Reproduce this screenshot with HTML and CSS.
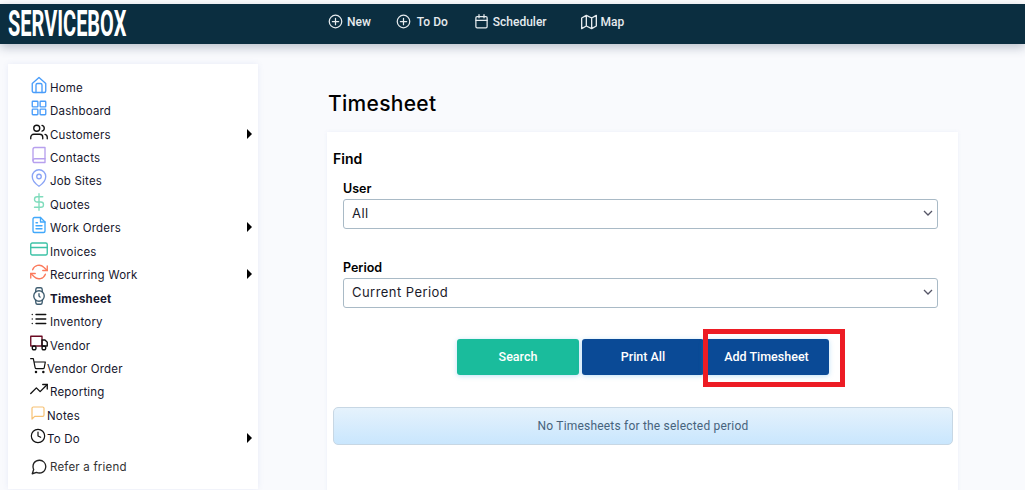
FILE: index.html
```html
<!DOCTYPE html>
<html lang="en">
<head>
<meta charset="UTF-8">
<meta name="viewport" content="width=device-width, initial-scale=1.0">
<title>Timesheet</title>
<link rel="stylesheet" href="styles.css">
</head>
<body>
<header class="topbar">
  <div class="logo-box"><span class="logo">SERVICEBOX</span></div>
  <nav class="topnav">
    <a class="topnav-new" href="#">
      <svg width="15" height="15" viewBox="0 0 24 24"><circle cx="12" cy="12" r="10"/><path d="M12 7v10M7 12h10"/></svg>New</a>
    <a class="topnav-todo" href="#">
      <svg width="15" height="15" viewBox="0 0 24 24"><circle cx="12" cy="12" r="10"/><path d="M12 7v10M7 12h10"/></svg>To Do</a>
    <a class="topnav-sched" href="#">
      <svg width="15" height="15" viewBox="0 0 24 24"><rect x="3" y="4" width="18" height="18" rx="2"/><path d="M16 1v5M8 1v5M3 10h18"/></svg>Scheduler</a>
    <a class="topnav-map" href="#">
      <svg width="16" height="16" viewBox="0 0 24 24"><path d="M1 6v16l7-4 8 4 7-4V2l-7 4-8-4-7 4zM8 2v16M16 6v16"/></svg>Map</a>
  </nav>
</header>

<div class="page">
  <aside class="sidebar">
    <a class="item" href="#"><svg class="ic c-blue" viewBox="0 0 24 24"><path d="M3 10l9-8 9 8v10a2 2 0 0 1-2 2H5a2 2 0 0 1-2-2z"/><path d="M8 22V12a2 2 0 0 1 2-2h4a2 2 0 0 1 2 2v10"/></svg><span>Home</span></a>
    <a class="item" href="#"><svg class="ic c-blue" viewBox="0 0 24 24"><rect x="3" y="3" width="7.5" height="7.5" rx="1"/><rect x="13.5" y="3" width="7.5" height="7.5" rx="1"/><rect x="13.5" y="13.5" width="7.5" height="7.5" rx="1"/><rect x="3" y="13.5" width="7.5" height="7.5" rx="1"/></svg><span>Dashboard</span></a>
    <a class="item" href="#"><svg class="ic c-black" viewBox="0 0 24 24"><path d="M17 21v-2a4 4 0 0 0-4-4H5a4 4 0 0 0-4 4v2"/><circle cx="9" cy="7" r="4"/><path d="M23 21v-2a4 4 0 0 0-3-3.87M16 3.13a4 4 0 0 1 0 7.75"/></svg><span>Customers</span><i class="arrow"></i></a>
    <a class="item" href="#"><svg class="ic c-purple" viewBox="0 0 24 24"><path d="M4 19.5A2.5 2.5 0 0 1 6.5 17H20"/><path d="M6.5 2H20v20H6.5A2.5 2.5 0 0 1 4 19.5v-15A2.5 2.5 0 0 1 6.5 2z"/></svg><span>Contacts</span></a>
    <a class="item" href="#"><svg class="ic c-periwinkle" viewBox="0 0 24 24"><path d="M21 10c0 7-9 13-9 13s-9-6-9-13a9 9 0 0 1 18 0z"/><circle cx="12" cy="10" r="3"/></svg><span>Job Sites</span></a>
    <a class="item" href="#"><svg class="ic c-mint" viewBox="0 0 24 24"><path d="M12 1v22M17 5H9.5a3.5 3.5 0 0 0 0 7h5a3.5 3.5 0 0 1 0 7H6"/></svg><span>Quotes</span></a>
    <a class="item" href="#"><svg class="ic c-sky" viewBox="0 0 24 24"><path d="M14 2H6a2 2 0 0 0-2 2v16a2 2 0 0 0 2 2h12a2 2 0 0 0 2-2V8z"/><path d="M14 2v6h6M16 13H8M16 17H8M10 9H8"/></svg><span>Work Orders</span><i class="arrow"></i></a>
    <a class="item" href="#"><svg class="ic c-teal" viewBox="0 0 24 24"><rect x="1" y="4" width="22" height="16" rx="2"/><path d="M1 10h22"/></svg><span>Invoices</span></a>
    <a class="item" href="#"><svg class="ic c-coral" viewBox="0 0 24 24"><path d="M23 4v6h-6M1 20v-6h6"/><path d="M3.51 9a9 9 0 0 1 14.85-3.36L23 10M1 14l4.64 4.36A9 9 0 0 0 20.49 15"/></svg><span>Recurring Work</span><i class="arrow"></i></a>
    <a class="item item-active" href="#"><svg class="ic c-slate" viewBox="0 0 24 24"><circle cx="12" cy="12" r="7"/><path d="M12 9v3l1.5 1.5M16.51 17.35l-.35 3.83a2 2 0 0 1-2 1.82H9.83a2 2 0 0 1-2-1.82l-.35-3.83m.01-10.7.35-3.83A2 2 0 0 1 9.83 1h4.35a2 2 0 0 1 2 1.82l.35 3.83"/></svg><span>Timesheet</span></a>
    <a class="item" href="#"><svg class="ic c-black" viewBox="0 0 24 24"><path d="M8 6h13M8 12h13M8 18h13M3 6h.01M3 12h.01M3 18h.01"/></svg><span>Inventory</span></a>
    <a class="item" href="#"><svg class="ic c-black" viewBox="0 0 24 24"><rect class="c-maroon" x="1" y="3" width="15" height="13"/><path d="M16 8h4l3 3v5h-7V8z"/><circle cx="5.5" cy="18.5" r="2.5"/><circle cx="18.5" cy="18.5" r="2.5"/></svg><span>Vendor</span></a>
    <a class="item item-tight" href="#"><svg class="ic c-black" viewBox="0 0 24 24"><circle cx="9" cy="21" r="1"/><circle cx="20" cy="21" r="1"/><path d="M1 1h4l2.68 13.39a2 2 0 0 0 2 1.61h9.72a2 2 0 0 0 2-1.61L23 6H6"/></svg><span>Vendor Order</span></a>
    <a class="item" href="#"><svg class="ic c-black" viewBox="0 0 24 24"><path d="M23 6l-9.5 9.5-5-5L1 18"/><path d="M17 6h6v6"/></svg><span>Reporting</span></a>
    <a class="item item-tight" href="#"><svg class="ic c-peach" viewBox="0 0 24 24"><path d="M21 15a2 2 0 0 1-2 2H7l-4 4V5a2 2 0 0 1 2-2h14a2 2 0 0 1 2 2z"/></svg><span>Notes</span></a>
    <a class="item item-tight" href="#"><svg class="ic c-black" viewBox="0 0 24 24"><circle cx="12" cy="12" r="10"/><path d="M12 6v6l4 2"/></svg><span>To Do</span><i class="arrow"></i></a>
    <a class="item item-refer" href="#"><svg class="ic c-dark" viewBox="0 0 24 24"><path d="M21 11.5a8.38 8.38 0 0 1-.9 3.8 8.5 8.5 0 0 1-7.6 4.7 8.38 8.38 0 0 1-3.8-.9L3 21l1.9-5.7a8.38 8.38 0 0 1-.9-3.8 8.5 8.5 0 0 1 4.7-7.6 8.38 8.38 0 0 1 3.8-.9h.5a8.48 8.48 0 0 1 8 8v.5z"/></svg><span>Refer a friend</span></a>
  </aside>

  <main class="main">
    <h1>Timesheet</h1>
    <section class="card">
      <h2>Find</h2>
      <div class="fields">
        <label class="field-label">User</label>
        <div class="select"><span>All</span><svg width="10" height="6" viewBox="0 0 10 6"><path d="M1 1l4 4 4-4"/></svg></div>
        <label class="field-label label-period">Period</label>
        <div class="select"><span>Current Period</span><svg width="10" height="6" viewBox="0 0 10 6"><path d="M1 1l4 4 4-4"/></svg></div>
      </div>
      <div class="buttons">
        <button class="btn btn-green">Search</button>
        <button class="btn btn-blue">Print All</button>
        <div class="highlight-wrap">
          <button class="btn btn-blue btn-add">Add Timesheet</button>
          <div class="highlight"></div>
        </div>
      </div>
      <div class="alert">No Timesheets for the selected period</div>
    </section>
  </main>
</div>
</body>
</html>
```

FILE: styles.css
```css
body {
  margin: 0;
  height: 490px;
  overflow: hidden;
  background-color: #f9fafd;
  font-family: "Inter", sans-serif;
  color: #000;
}

a {
  text-decoration: none;
  color: inherit;
}

/* top bar */
.topbar {
  display: flex;
  height: 40px;
  margin-top: 4px;
  background-color: #0b2e40;
  box-shadow: 0 3px 10px rgba(30, 50, 80, 0.3);
  position: relative;
}

body::before {
  content: "";
  display: block;
  height: 4px;
  margin-bottom: -4px;
  background-color: #fff;
}

.logo-box {
  width: 328px;
  padding-left: 8px;
  box-sizing: border-box;
}

.logo {
  display: inline-block;
  font-family: "Roboto", sans-serif;
  font-weight: 700;
  font-size: 37px;
  line-height: 40px;
  color: #fff;
  transform: scaleX(0.54);
  transform-origin: left center;
  white-space: nowrap;
}

.topnav {
  display: flex;
  align-items: center;
  padding-bottom: 5px;
  font-family: "Roboto", sans-serif;
  font-weight: 500;
  font-size: 12px;
  color: #e6ebee;
}

.topnav a {
  display: flex;
  align-items: center;
  gap: 4px;
}

.topnav svg {
  fill: none;
  stroke: #e6ebee;
  stroke-width: 2;
  stroke-linecap: round;
  stroke-linejoin: round;
}

.topnav-todo { margin-left: 25px; gap: 6px !important; }
.topnav-sched { margin-left: 26px; }
.topnav-map { margin-left: 34px; }

/* layout */
.page {
  display: flex;
  padding: 20px 0 0 8px;
}

.sidebar {
  width: 250px;
  height: 425px;
  box-sizing: border-box;
  padding: 12px 6px 0 22px;
  background-color: #fff;
  box-shadow: 0 0 6px rgba(90, 110, 200, 0.1);
  font-size: 11.5px;
  letter-spacing: 0.2px;
  color: #16162c;
}

.item {
  display: flex;
  align-items: center;
  height: 23.45px;
}

.item span {
  margin-left: 2px;
}

.item-tight span { margin-left: 0; }
.item-active { font-weight: 700; }
.item-refer { margin-top: 4.5px; color: #333; }

.ic {
  width: 18px;
  height: 18px;
  margin-bottom: 6px;
  flex-shrink: 0;
  fill: none;
  stroke-width: 1.8;
  stroke-linecap: round;
  stroke-linejoin: round;
}

.item-tight .ic { width: 16px; height: 16px; margin-right: 1px; }
.item-refer .ic { margin-bottom: 0; }

.c-blue { stroke: #4a9dfa; }
.c-black { stroke: #111; }
.c-purple { stroke: #b7a0ee; }
.c-periwinkle { stroke: #8aa4f5; }
.c-mint { stroke: #7fdcbc; }
.c-sky { stroke: #41a8fb; }
.c-teal { stroke: #3cc2a6; }
.c-coral { stroke: #fb7a5c; }
.c-slate { stroke: #3f5d70; }
.c-maroon { stroke: #6a0a22; }
.c-peach { stroke: #f7c274; }
.c-dark { stroke: #222; }

.arrow {
  margin-left: auto;
  margin-bottom: 2px;
  width: 0;
  height: 0;
  border-left: 5px solid #000;
  border-top: 5px solid transparent;
  border-bottom: 5px solid transparent;
}

/* main */
.main {
  width: 631px;
  margin-left: 69px;
}

.main h1 {
  margin: 28px 0 17px 1px;
  font-size: 21px;
  line-height: 23px;
  font-weight: 500;
  letter-spacing: 0.3px;
}

.card {
  height: 360px;
  padding: 18px 5px 0 6px;
  background-color: #fff;
  box-shadow: 0 0 4px rgba(90, 110, 200, 0.08);
}

.card h2 {
  margin: 0;
  font-size: 14px;
  line-height: 18px;
  font-weight: 600;
}

.fields {
  padding: 0 15px 0 10px;
  margin-top: 13px;
}

.field-label {
  display: block;
  font-size: 12.5px;
  line-height: 16px;
  font-weight: 600;
  margin-bottom: 2px;
}

.label-period { margin-top: 31px; }

.select {
  display: flex;
  justify-content: space-between;
  align-items: center;
  height: 30px;
  box-sizing: border-box;
  padding: 0 4px 2px 8px;
  border: 1px solid #a9bac6;
  border-radius: 3px;
  font-size: 13px;
  color: #1a1a2a;
  letter-spacing: 0.45px;
}

.select svg {
  fill: none;
  stroke: #556;
  stroke-width: 1.3;
}

.buttons {
  display: flex;
  margin: 31px 0 0 124px;
  gap: 3px;
}

.btn {
  width: 122px;
  height: 36px;
  border: none;
  border-radius: 3px;
  padding: 0 0 2px;
  font-family: "Roboto", sans-serif;
  font-size: 12.5px;
  font-weight: 500;
  color: #fff;
  box-shadow: 0 1px 5px rgba(70, 170, 230, 0.35);
}

.btn-green { background-color: #1abc9c; }
.btn-blue { background-color: #0a4a96; }

.btn-add {
  width: 125px;
  display: block;
}

.highlight-wrap {
  position: relative;
  margin-left: -3px;
}

.highlight {
  position: absolute;
  left: -1px;
  top: -10px;
  width: 132px;
  height: 48px;
  border: 5px solid #ed1c24;
}

.alert {
  margin: 32px 0 0;
  height: 38px;
  box-sizing: border-box;
  display: flex;
  align-items: center;
  justify-content: center;
  border: 1px solid #c7d7e4;
  border-radius: 5px;
  background: linear-gradient(#e5f2fc, #c9e6fd);
  font-family: "Roboto", sans-serif;
  font-size: 12px;
  color: #47637c;
  letter-spacing: 0.2px;
}
```
